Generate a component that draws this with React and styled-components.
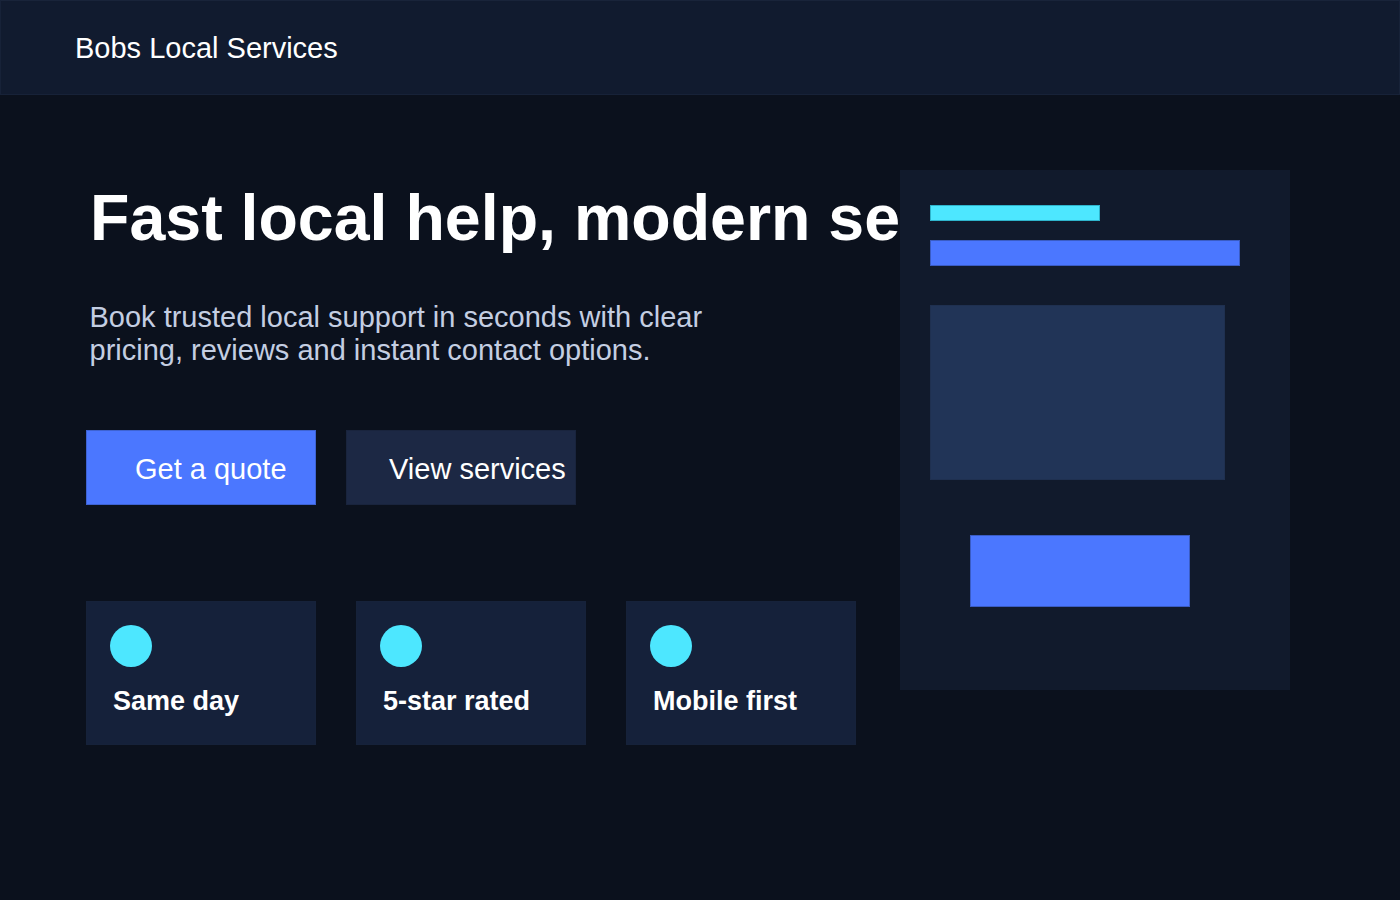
import React from 'react'
import styled, { createGlobalStyle } from 'styled-components'

const GlobalStyle = createGlobalStyle`
  html, body {
    margin: 0;
    padding: 0;
    background: #0b111d;
  }
  body {
    font-family: "Liberation Sans", Arial, sans-serif;
    color: #ffffff;
  }
  * {
    box-sizing: border-box;
  }
`

const Page = styled.div`
  width: 1400px;
  height: 900px;
  background: #0b111d;
  overflow: hidden;
`

const Header = styled.header`
  height: 95px;
  display: flex;
  align-items: center;
  padding: 2px 0 0 74px;
  background: #111b2f;
  border: 1px solid #172238;
  border-top-color: #19243a;
`

const Brand = styled.div`
  font-size: 29px;
  color: #ffffff;
`

const Hero = styled.main`
  display: grid;
  grid-template-columns: 814px 390px;
  align-items: start;
  padding: 75px 0 0 86px;
`

const Copy = styled.section`
  overflow: hidden;
  display: flex;
  flex-direction: column;
  align-items: flex-start;
`

const Title = styled.h1`
  margin: 10px 0 0 4px;
  font-size: 64.5px;
  line-height: 76px;
  font-weight: 700;
  white-space: nowrap;
  color: #ffffff;
`

const Lead = styled.p`
  margin: 45px 0 0 3.5px;
  max-width: 640px;
  font-size: 29px;
  line-height: 33px;
  color: #c4cee2;
`

const Actions = styled.div`
  display: flex;
  gap: 30px;
  margin-top: 63px;
`

const Button = styled.button`
  width: 230px;
  height: 75px;
  padding: 3px 0 0 ${p => p.$inset}px;
  text-align: left;
  font-family: inherit;
  font-size: 29px;
  color: #ffffff;
  background: ${p => (p.$primary ? '#4b77ff' : '#1c2844')};
  border: 1px solid ${p => (p.$primary ? '#3e63d2' : '#19243d')};
  cursor: pointer;
`

const Features = styled.div`
  display: flex;
  gap: 40px;
  margin-top: 96px;
`

const Feature = styled.div`
  width: 230px;
  height: 144px;
  padding: 23px;
  background: #15213a;
  border: 1px solid #16223a;
`

const Dot = styled.div`
  width: 42px;
  height: 42px;
  border-radius: 50%;
  background: #4de7ff;
`

const FeatureLabel = styled.div`
  margin: 19px 0 0 3px;
  font-size: 27px;
  font-weight: 700;
  color: #ffffff;
`

const Mockup = styled.aside`
  position: relative;
  height: 520px;
  padding: 35px 30px;
  display: flex;
  flex-direction: column;
  align-items: flex-start;
  background: #111a2c;
`

const Bar = styled.div`
  width: ${p => p.$w}px;
  height: ${p => p.$h}px;
  margin-top: ${p => p.$top || 0}px;
  margin-left: ${p => p.$left || 0}px;
  background: ${p => p.$color};
  border: 1px solid ${p => p.$edge};
`

export default function App() {
  return (
    <Page>
      <GlobalStyle />
      <Header>
        <Brand>Bobs Local Services</Brand>
      </Header>
      <Hero>
        <Copy>
          <Title>Fast local help, modern services</Title>
          <Lead>
            Book trusted local support in seconds with clear pricing, reviews and instant contact options.
          </Lead>
          <Actions>
            <Button $primary $inset={48}>Get a quote</Button>
            <Button $inset={42}>View services</Button>
          </Actions>
          <Features>
            {['Same day', '5-star rated', 'Mobile first'].map(label => (
              <Feature key={label}>
                <Dot />
                <FeatureLabel>{label}</FeatureLabel>
              </Feature>
            ))}
          </Features>
        </Copy>
        <Mockup>
          <Bar $w={170} $h={16} $color="#4de7ff" $edge="#2fb4cc" />
          <Bar $w={310} $h={26} $top={19} $color="#4b77ff" $edge="#3a5cc4" />
          <Bar $w={295} $h={175} $top={39} $color="#213457" $edge="#1f3050" />
          <Bar $w={220} $h={72} $top={55} $left={40} $color="#4b77ff" $edge="#3a5cc4" />
        </Mockup>
      </Hero>
    </Page>
  )
}
